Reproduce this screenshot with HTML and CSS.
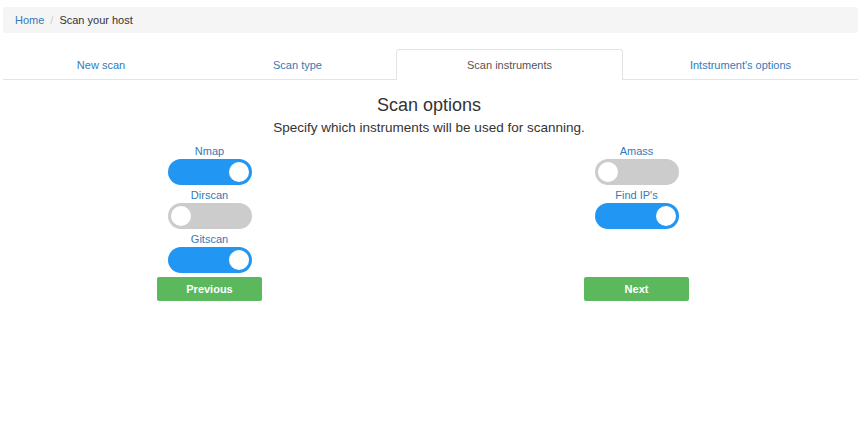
FILE: index.html
```html
<!DOCTYPE html>
<html>
<head>
<meta charset="utf-8">
<link rel="stylesheet" href="styles.css">
</head>
<body>
<div class="page">
  <ol class="breadcrumb">
    <li><a href="#">Home</a></li>
    <li class="sep">/</li>
    <li class="current">Scan your host</li>
  </ol>
  <ul class="tabs">
    <li><a href="#">New scan</a></li>
    <li><a href="#">Scan type</a></li>
    <li class="active"><a href="#">Scan instruments</a></li>
    <li><a href="#">Intstrument's options</a></li>
  </ul>
  <div class="content">
    <h3 class="title">Scan options</h3>
    <p class="subtitle">Specify which instruments will be used for scanning.</p>
    <div class="cols">
      <div class="col">
        <div class="opt"><span class="lbl">Nmap</span><span class="switch on"><span class="knob"></span></span></div>
        <div class="opt"><span class="lbl">Dirscan</span><span class="switch"><span class="knob"></span></span></div>
        <div class="opt"><span class="lbl">Gitscan</span><span class="switch on"><span class="knob"></span></span></div>
        <button class="btn">Previous</button>
      </div>
      <div class="col">
        <div class="opt"><span class="lbl">Amass</span><span class="switch"><span class="knob"></span></span></div>
        <div class="opt"><span class="lbl">Find IP's</span><span class="switch on"><span class="knob"></span></span></div>
        <div class="opt spacer"></div>
        <button class="btn">Next</button>
      </div>
    </div>
  </div>
</div>
</body>
</html>
```

FILE: styles.css
```css
html, body {
  margin: 0;
  padding: 0;
  background: #fff;
  font-family: "Liberation Sans", Arial, sans-serif;
  font-size: 11px;
  color: #333;
}
.page {
  padding: 7px 7px 0 3px;
}
.breadcrumb {
  list-style: none;
  margin: 0;
  padding: 0 12px;
  height: 26px;
  background: #f5f5f5;
  border-radius: 3px;
  display: flex;
  align-items: center;
  gap: 5px;
}
.breadcrumb li { line-height: 13px; }
.breadcrumb a { color: #337ab7; text-decoration: none; }
.breadcrumb .sep { color: #ccc; padding: 0 1px; }
.breadcrumb .current { color: #333; }
.tabs {
  list-style: none;
  margin: 16px 0 0 0;
  padding: 0;
  display: grid;
  grid-template-columns: 196px 197px 227px 1fr;
  border-bottom: 1px solid #e3e3e3;
}
.tabs li {
  height: 29px;
  display: flex;
  align-items: center;
  justify-content: center;
  border: 1px solid transparent;
  border-bottom: none;
  margin-bottom: -1px;
  border-radius: 3px 3px 0 0;
}
.tabs a { color: #337ab7; text-decoration: none; }
.tabs li.active {
  border-color: #e3e3e3;
  background: #fff;
  height: 30px;
}
.tabs li.active a { color: #555; }
.content { margin-left: -3px; }
.title {
  margin: 14px 0 0 0;
  text-align: center;
  font-size: 18px;
  font-weight: normal;
  line-height: 22px;
  color: #333;
}
.subtitle {
  margin: 3px 0 0 0;
  text-align: center;
  font-size: 13.5px;
  line-height: 17px;
  color: #333;
}
.cols {
  display: grid;
  grid-template-columns: 419px 435px;
  margin-top: 9px;
}
.col {
  display: flex;
  flex-direction: column;
  align-items: center;
}
.opt {
  display: flex;
  flex-direction: column;
  align-items: center;
  height: 44px;
}
.lbl {
  color: #337ab7;
  line-height: 13px;
  height: 14px;
}
.switch {
  width: 84px;
  height: 26px;
  border-radius: 13px;
  background: #ccc;
  display: flex;
  align-items: center;
  padding: 0 3px;
  box-sizing: border-box;
}
.switch.on {
  background: #2196f3;
  justify-content: flex-end;
}
.knob {
  width: 20px;
  height: 20px;
  border-radius: 50%;
  background: #fff;
}
.btn {
  width: 105px;
  height: 24px;
  margin-top: 0;
  border: none;
  border-radius: 2px;
  background: #5cb85c;
  color: #fff;
  font-family: "Liberation Sans", Arial, sans-serif;
  font-weight: bold;
  font-size: 11px;
  padding: 0;
}
```
